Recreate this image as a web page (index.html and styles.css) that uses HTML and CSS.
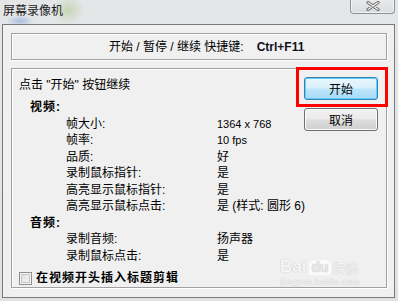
FILE: index.html
```html
<!DOCTYPE html>
<html lang="zh-CN">
<head>
<meta charset="utf-8">
<title>屏幕录像机</title>
<link rel="stylesheet" href="styles.css">
</head>
<body>
<div class="screen">
  <div class="titlebar">
    <span class="title">屏幕录像机</span>
    <div class="close">
      <svg width="14" height="10" viewBox="0 0 14 10">
        <path d="M2 1.5 L12 8.5 M12 1.5 L2 8.5" stroke="#6c6c6c" stroke-width="3.2" stroke-linecap="round"/>
        <path d="M2 1.5 L12 8.5 M12 1.5 L2 8.5" stroke="#f4f4f4" stroke-width="1.2" stroke-linecap="round"/>
      </svg>
    </div>
  </div>
  <div class="frame">
    <div class="hotkey">开始 / 暂停 / 继续 快捷键:<b class="keys">Ctrl+F11</b></div>
    <div class="panel">
      <div class="info">
        <div class="prompt">点击 "开始" 按钮继续</div>
        <div class="rows">
          <div class="section">视频:</div>
          <div class="item"><span>帧大小:</span><span class="lat">1364 x 768</span></div>
          <div class="item"><span>帧率:</span><span class="lat">10 fps</span></div>
          <div class="item"><span>品质:</span><span>好</span></div>
          <div class="item"><span>录制鼠标指针:</span><span>是</span></div>
          <div class="item"><span>高亮显示鼠标指针:</span><span>是</span></div>
          <div class="item"><span>高亮显示鼠标点击:</span><span>是 (样式: 圆形 6)</span></div>
          <div class="section">音频:</div>
          <div class="item"><span>录制音频:</span><span>扬声器</span></div>
          <div class="item"><span>录制鼠标点击:</span><span>是</span></div>
        </div>
        <div class="check"><span class="box"></span><span class="check-label">在视频开头插入标题剪辑</span></div>
      </div>
      <div class="buttons">
        <div class="btn primary">开始</div>
        <div class="btn">取消</div>
      </div>
      <div class="highlight"></div>
      <div class="watermark">
        <div class="wm-logo"><span class="wm-bai">Bai</span><span class="wm-du">du</span><span class="wm-jy">经验</span></div>
        <div class="wm-url">jingyan.baidu.com</div>
      </div>
    </div>
  </div>
</div>
</body>
</html>
```

FILE: styles.css
```css
html, body {
  margin: 0;
  padding: 0;
}
body {
  width: 398px;
  height: 301px;
  overflow: hidden;
  font-family: "Liberation Sans", "Noto Sans CJK SC", sans-serif;
  font-size: 12px;
  color: #000;
}
.screen {
  width: 398px;
  height: 301px;
  background:
    radial-gradient(ellipse 14px 6px at 20px 21px, rgba(120,160,220,0.55), rgba(120,160,220,0) 100%),
    radial-gradient(ellipse 16px 14px at 68px 10px, rgba(160,195,120,0.45), rgba(160,195,120,0) 100%),
    linear-gradient(#e4e6e8, #dfe1e3);
  display: flex;
  flex-direction: column;
}
.titlebar {
  height: 24px;
  display: flex;
  align-items: flex-start;
  justify-content: space-between;
}
.title {
  margin: 2px 0 0 3px;
  font-family: "Noto Sans CJK SC", sans-serif;
  font-size: 12px;
  line-height: 16px;
  color: #1a1a1a;
}
.close {
  width: 45px;
  height: 15px;
  margin: -1px 3px 0 0;
  box-sizing: border-box;
  border: 1px solid #8e9296;
  border-top: none;
  border-radius: 0 0 4px 4px;
  background: linear-gradient(#e9eaeb, #dadcde);
  box-shadow: inset 0 0 0 1px rgba(255,255,255,0.6);
  display: flex;
  justify-content: center;
  align-items: center;
}
.frame {
  margin: 0 3px 0 2px;
  height: 274px;
  box-sizing: border-box;
  border: 1px solid #767a7e;
  background: #f0f0f0;
  padding: 8px 7px 9px 8px;
  display: flex;
  flex-direction: column;
  gap: 8px;
}
.hotkey {
  height: 27px;
  box-sizing: border-box;
  border: 1px solid #a0a0a0;
  box-shadow: inset 1px 1px 0 #fff, 1px 1px 0 #fff;
  padding-left: 97px;
  display: flex;
  align-items: center;
  white-space: pre;
  line-height: 16px;
}
.keys {
  margin-left: 13px;
  font-family: "Liberation Sans", sans-serif;
  font-weight: bold;
  font-size: 12px;
  color: #101020;
}
.panel {
  position: relative;
  flex: 1;
  box-sizing: border-box;
  border: 1px solid #a0a0a0;
  box-shadow: inset 1px 1px 0 #fff, 1px 1px 0 #fff;
  padding: 8px 8px 0 7px;
  display: flex;
  gap: 10px;
}
.info {
  flex: 1;
  min-width: 0;
  display: flex;
  flex-direction: column;
}
.prompt {
  line-height: 16px;
  white-space: pre;
}
.rows {
  margin-top: 6px;
  display: flex;
  flex-direction: column;
}
.section {
  height: 16.5px;
  line-height: 16.5px;
  padding-left: 11px;
  font-weight: bold;
  letter-spacing: 1px;
}
.item {
  height: 16.5px;
  line-height: 16.5px;
  padding-left: 47px;
  display: grid;
  grid-template-columns: 151px auto;
  white-space: pre;
}
.lat {
  font-size: 11px;
}
.check {
  margin-top: 6px;
  display: flex;
  align-items: center;
  gap: 4px;
}
.box {
  width: 13px;
  height: 13px;
  box-sizing: border-box;
  border: 1px solid #8f8f8f;
  background: linear-gradient(135deg, #dcdcdc, #f8f8f8);
  box-shadow: inset 0 0 0 1px #f4f4f4, inset 0 0 0 2px #c8c8c8;
}
.check-label {
  font-weight: bold;
  letter-spacing: 1px;
  line-height: 16px;
  white-space: nowrap;
}
.buttons {
  flex-shrink: 0;
  display: flex;
  flex-direction: column;
  gap: 8px;
}
.btn {
  width: 74px;
  height: 23px;
  box-sizing: border-box;
  border: 1px solid #707070;
  border-radius: 3px;
  background: linear-gradient(#f2f2f2 0%, #ebebeb 48%, #dddddd 52%, #cfcfcf 100%);
  box-shadow: inset 0 0 0 1px #fbfbfb;
  display: flex;
  align-items: center;
  justify-content: center;
  font-family: "Noto Sans CJK SC", sans-serif;
  font-size: 12px;
  line-height: 16px;
}
.primary {
  border-color: #3c7fb1;
  background: linear-gradient(#eaf6fd 0%, #d9f0fc 48%, #bee6fd 52%, #a7d9f5 100%);
  box-shadow: inset 0 0 0 1px #5fd0fb;
}
.highlight {
  position: absolute;
  left: 284px;
  top: -2px;
  width: 92px;
  height: 40px;
  box-sizing: border-box;
  border: 3px solid #ff0000;
}
.watermark {
  position: absolute;
  left: 268px;
  top: 188px;
  color: rgba(255,255,255,0.85);
  text-shadow: 0 0 1px #c8c8c8, 0 0 1px #c8c8c8;
  pointer-events: none;
}
.wm-logo {
  display: flex;
  align-items: flex-end;
  height: 18px;
}
.wm-bai {
  font-family: "Liberation Sans", sans-serif;
  font-weight: bold;
  font-size: 17px;
  line-height: 17px;
}
.wm-du {
  margin-left: 3px;
  padding: 0 2px;
  border-radius: 6px 6px 3px 3px;
  background: rgba(255,255,255,0.7);
  color: #e8e8e8;
  font-family: "Liberation Sans", sans-serif;
  font-weight: bold;
  font-size: 14px;
  line-height: 15px;
}
.wm-jy {
  margin-left: 2px;
  font-family: "Noto Sans CJK SC", sans-serif;
  font-size: 13px;
  line-height: 15px;
}
.wm-url {
  margin-top: 1px;
  font-family: "Liberation Serif", serif;
  font-size: 10px;
  line-height: 11px;
  letter-spacing: 0.3px;
}
```
